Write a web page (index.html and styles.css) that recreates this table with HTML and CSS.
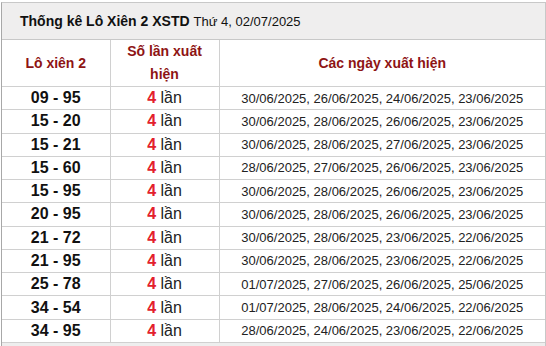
FILE: index.html
```html
<!DOCTYPE html>
<html lang="vi">
<head>
<meta charset="utf-8">
<link rel="stylesheet" href="styles.css">
</head>
<body>
<div class="box">
  <div class="title"><strong>Thống kê Lô Xiên 2 XSTD</strong> <span class="date">Thứ 4, 02/07/2025</span></div>
  <table class="stats">
    <colgroup><col class="w1"><col class="w2"><col></colgroup>
    <thead>
      <tr><th>Lô xiên 2</th><th>Số lần xuất hiện</th><th>Các ngày xuất hiện</th></tr>
    </thead>
    <tbody>
      <tr><td class="pair">09 - 95</td><td class="cnt"><b>4</b> lần</td><td class="days">30/06/2025, 26/06/2025, 24/06/2025, 23/06/2025</td></tr>
      <tr><td class="pair">15 - 20</td><td class="cnt"><b>4</b> lần</td><td class="days">30/06/2025, 28/06/2025, 26/06/2025, 23/06/2025</td></tr>
      <tr><td class="pair">15 - 21</td><td class="cnt"><b>4</b> lần</td><td class="days">30/06/2025, 28/06/2025, 27/06/2025, 23/06/2025</td></tr>
      <tr><td class="pair">15 - 60</td><td class="cnt"><b>4</b> lần</td><td class="days">28/06/2025, 27/06/2025, 26/06/2025, 23/06/2025</td></tr>
      <tr><td class="pair">15 - 95</td><td class="cnt"><b>4</b> lần</td><td class="days">30/06/2025, 28/06/2025, 26/06/2025, 23/06/2025</td></tr>
      <tr><td class="pair">20 - 95</td><td class="cnt"><b>4</b> lần</td><td class="days">30/06/2025, 28/06/2025, 26/06/2025, 23/06/2025</td></tr>
      <tr><td class="pair">21 - 72</td><td class="cnt"><b>4</b> lần</td><td class="days">30/06/2025, 28/06/2025, 23/06/2025, 22/06/2025</td></tr>
      <tr><td class="pair">21 - 95</td><td class="cnt"><b>4</b> lần</td><td class="days">30/06/2025, 28/06/2025, 23/06/2025, 22/06/2025</td></tr>
      <tr><td class="pair">25 - 78</td><td class="cnt"><b>4</b> lần</td><td class="days">01/07/2025, 27/06/2025, 26/06/2025, 25/06/2025</td></tr>
      <tr><td class="pair">34 - 54</td><td class="cnt"><b>4</b> lần</td><td class="days">01/07/2025, 28/06/2025, 24/06/2025, 22/06/2025</td></tr>
      <tr><td class="pair">34 - 95</td><td class="cnt"><b>4</b> lần</td><td class="days">28/06/2025, 24/06/2025, 23/06/2025, 22/06/2025</td></tr>
    </tbody>
  </table>
  <div class="foot"></div>
</div>
</body>
</html>
```

FILE: styles.css
```css
html, body {
  margin: 0;
  padding: 0;
  background: #fff;
}

body {
  font-family: "Liberation Sans", Arial, sans-serif;
  color: #111;
}

.box {
  margin: 2px 0 0 1px;
  width: 543px;
  border-top: 1px solid #c8c8c8;
  border-left: 1px solid #a8a8a8;
  border-right: 1px solid #c8c8c8;
}

.title {
  height: 37px;
  box-sizing: border-box;
  padding: 0 0 0 18px;
  display: flex;
  align-items: center;
  gap: 4px;
  background: #efeeee;
  border-bottom: 1px solid #c8c8c8;
  font-size: 14px;
  color: #111;
}

.title strong {
  font-weight: bold;
}

.title .date {
  font-size: 13px;
  font-weight: normal;
}

.stats {
  width: 100%;
  border-collapse: collapse;
  table-layout: fixed;
}

.w1 { width: 108px; }
.w2 { width: 109px; }

.stats th,
.stats td {
  border: 1px solid #d0d0d0;
  text-align: center;
  padding: 0 5px;
}

.stats tr > :first-child { border-left: none; }
.stats tr > :last-child { border-right: none; }
.stats thead th { border-top: none; }

.stats th {
  height: 46px;
  font-size: 14px;
  line-height: 23px;
  font-weight: bold;
  color: #8e1414;
}

.stats tbody tr {
  height: 23.27px;
}

.pair {
  font-size: 16px;
  font-weight: bold;
  color: #111;
}

.cnt {
  font-size: 16px;
  color: #222;
}

.cnt b {
  color: #e3202c;
}

.days {
  font-size: 13px;
  color: #222;
}

.foot {
  height: 6px;
  background: #eeeeee;
}
```
